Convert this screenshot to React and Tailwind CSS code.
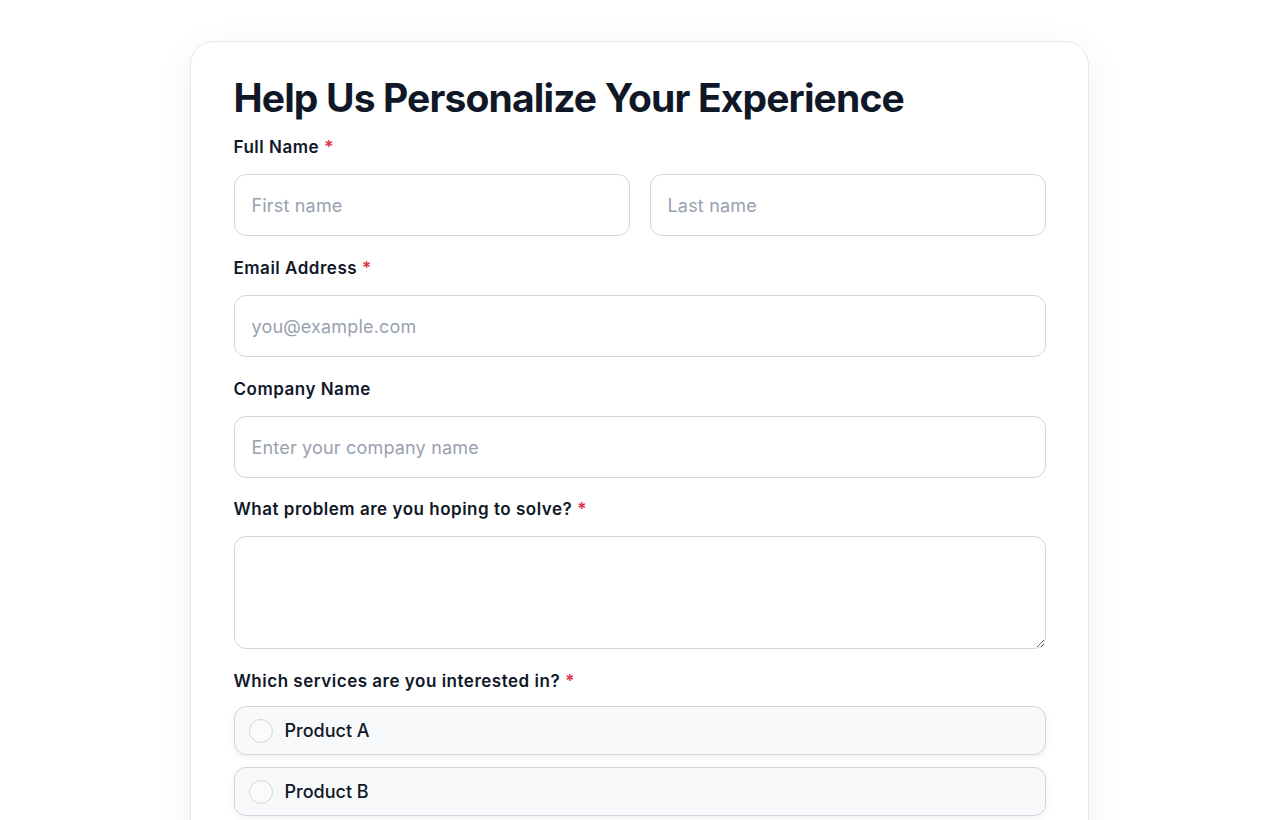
import React from "react";

function Label({ children, required, className = "mb-[15px]" }) {
  return (
    <label className={`block text-[17px] font-semibold leading-6 tracking-[0.03em] text-gray-900 ${className}`}>
      {children}
      {required && <span className="ml-[5px] text-[#e0314b]">*</span>}
    </label>
  );
}

const inputCls =
  "block w-full h-[62px] rounded-xl border border-gray-300 bg-white px-[17px] text-[18px] tracking-[0.01em] text-gray-900 placeholder:text-gray-400 outline-none";

function Option({ label }) {
  return (
    <label className="flex h-[49px] items-center gap-3 rounded-xl border border-gray-300 bg-[#f8f9fb] px-[14px] shadow-[0_2px_6px_rgba(0,0,0,0.06)]">
      <span className="h-[24px] w-[24px] rounded-full border border-gray-300 bg-white/40" />
      <span className="text-[18px] font-medium text-gray-900">{label}</span>
    </label>
  );
}

export default function App() {
  return (
    <div className="min-h-[820px] bg-white pt-[41px] font-['Inter',sans-serif]">
      <div className="mx-auto w-[899px] translate-x-[-1px] rounded-3xl border border-gray-200 bg-white pl-[43px] pr-[42px] pt-[32px] pb-10 shadow-[0_10px_40px_rgba(0,0,0,0.06)]">
        <h1 className="mb-[13px] text-[39px] font-bold leading-[48px] tracking-[-0.022em] text-gray-900">
          Help Us Personalize Your Experience
        </h1>

        <div className="mb-5">
          <Label required>Full Name</Label>
          <div className="grid grid-cols-2 gap-5">
            <input className={inputCls} placeholder="First name" />
            <input className={inputCls} placeholder="Last name" />
          </div>
        </div>

        <div className="mb-5">
          <Label required>Email Address</Label>
          <input className={inputCls} placeholder="you@example.com" />
        </div>

        <div className="mb-[19px]">
          <Label>Company Name</Label>
          <input className={inputCls} placeholder="Enter your company name" />
        </div>

        <div className="mb-5">
          <Label required>What problem are you hoping to solve?</Label>
          <textarea className="block h-[113px] w-full rounded-xl border border-gray-300 bg-white px-[17px] py-3 text-[18px] outline-none" />
        </div>

        <div>
          <Label required className="mb-[13px]">Which services are you interested in?</Label>
          <div className="flex flex-col gap-3">
            <Option label="Product A" />
            <Option label="Product B" />
            <Option label="Product C" />
            <Option label="Product D" />
          </div>
        </div>
      </div>
    </div>
  );
}
